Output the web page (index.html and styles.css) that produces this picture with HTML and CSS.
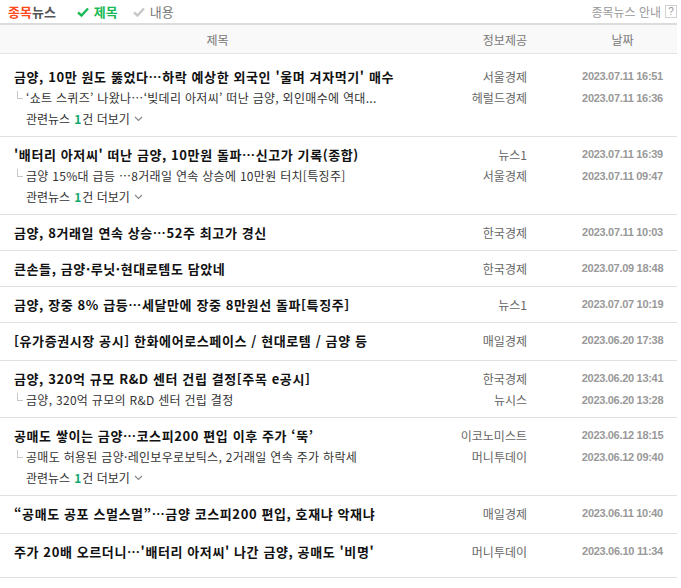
FILE: index.html
```html
<!DOCTYPE html>
<html lang="ko">

<head>
  <meta charset="UTF-8" />
  <meta name="viewport" content="width=device-width, initial-scale=1.0" />
  <title>종목뉴스</title>
  <link rel="stylesheet" href="styles.css">
</head>

<body>
  <div class="news_wrap">
    <div class="topbar">
      <div class="tabs">
        <span class="brand"><em>종목</em>뉴스</span>
        <span class="tab on">
          <svg width="12" height="10" viewBox="0 0 12 10"><path d="M1 5.5 L4.5 8.5 L11 1.5" fill="none" stroke="#19b955" stroke-width="2.4" /></svg>
          제목
        </span>
        <span class="tab">
          <svg width="12" height="10" viewBox="0 0 12 10"><path d="M1 5.5 L4.5 8.5 L11 1.5" fill="none" stroke="#c8c8c8" stroke-width="2.4" /></svg>
          내용
        </span>
      </div>
      <div class="guide">종목뉴스 안내 <span class="qbox">?</span></div>
    </div>

    <div class="thead">
      <span class="c-tit">제목</span>
      <span class="c-src">정보제공</span>
      <span class="c-date">날짜</span>
    </div>

    <div class="list">
      <div class="item first">
        <div class="line main"><span class="tit">금양, 10만 원도 뚫었다…하락 예상한 외국인 '울며 겨자먹기' 매수</span><span class="src">서울경제</span><span class="date">2023.07.11 16:51</span></div>
        <div class="line sub"><span class="tit"><i class="tree"></i>‘쇼트 스퀴즈’ 나왔나…‘빚데리 아저씨’ 떠난 금양, 외인매수에 역대...</span><span class="src">헤럴드경제</span><span class="date">2023.07.11 16:36</span></div>
        <div class="line more">관련뉴스 <b>1</b>건 더보기 <svg width="9" height="6" viewBox="0 0 9 6"><path d="M1 1 L4.5 4.5 L8 1" fill="none" stroke="#888" stroke-width="1.2" /></svg></div>
      </div>

      <div class="item">
        <div class="line main"><span class="tit">'배터리 아저씨' 떠난 금양, 10만원 돌파…신고가 기록(종합)</span><span class="src">뉴스1</span><span class="date">2023.07.11 16:39</span></div>
        <div class="line sub"><span class="tit"><i class="tree"></i>금양 15%대 급등 …8거래일 연속 상승에 10만원 터치[특징주]</span><span class="src">서울경제</span><span class="date">2023.07.11 09:47</span></div>
        <div class="line more">관련뉴스 <b>1</b>건 더보기 <svg width="9" height="6" viewBox="0 0 9 6"><path d="M1 1 L4.5 4.5 L8 1" fill="none" stroke="#888" stroke-width="1.2" /></svg></div>
      </div>

      <div class="item">
        <div class="line main"><span class="tit">금양, 8거래일 연속 상승…52주 최고가 경신</span><span class="src">한국경제</span><span class="date">2023.07.11 10:03</span></div>
      </div>

      <div class="item">
        <div class="line main"><span class="tit">큰손들, 금양·루닛·현대로템도 담았네</span><span class="src">한국경제</span><span class="date">2023.07.09 18:48</span></div>
      </div>

      <div class="item">
        <div class="line main"><span class="tit">금양, 장중 8% 급등…세달만에 장중 8만원선 돌파[특징주]</span><span class="src">뉴스1</span><span class="date">2023.07.07 10:19</span></div>
      </div>

      <div class="item tall">
        <div class="line main"><span class="tit">[유가증권시장 공시] 한화에어로스페이스 / 현대로템 / 금양 등</span><span class="src">매일경제</span><span class="date">2023.06.20 17:38</span></div>
      </div>

      <div class="item">
        <div class="line main"><span class="tit">금양, 320억 규모 R&amp;D 센터 건립 결정[주목 e공시]</span><span class="src">한국경제</span><span class="date">2023.06.20 13:41</span></div>
        <div class="line sub"><span class="tit"><i class="tree"></i>금양, 320억 규모의 R&amp;D 센터 건립 결정</span><span class="src">뉴시스</span><span class="date">2023.06.20 13:28</span></div>
      </div>

      <div class="item">
        <div class="line main"><span class="tit">공매도 쌓이는 금양…코스피200 편입 이후 주가 ‘뚝’</span><span class="src">이코노미스트</span><span class="date">2023.06.12 18:15</span></div>
        <div class="line sub"><span class="tit"><i class="tree"></i>공매도 허용된 금양·레인보우로보틱스, 2거래일 연속 주가 하락세</span><span class="src">머니투데이</span><span class="date">2023.06.12 09:40</span></div>
        <div class="line more">관련뉴스 <b>1</b>건 더보기 <svg width="9" height="6" viewBox="0 0 9 6"><path d="M1 1 L4.5 4.5 L8 1" fill="none" stroke="#888" stroke-width="1.2" /></svg></div>
      </div>

      <div class="item tall">
        <div class="line main"><span class="tit">“공매도 공포 스멀스멀”…금양 코스피200 편입, 호재냐 악재냐</span><span class="src">매일경제</span><span class="date">2023.06.11 10:40</span></div>
      </div>

      <div class="item last">
        <div class="line main"><span class="tit">주가 20배 오르더니…'배터리 아저씨' 나간 금양, 공매도 '비명'</span><span class="src">머니투데이</span><span class="date">2023.06.10 11:34</span></div>
      </div>
    </div>
  </div>
</body>

</html>
```

FILE: styles.css
```css
/* Main Container */
body {
  margin: 0;
  background: #fff;
}

.news_wrap {
  width: 677px;
  font-family: "Noto Sans CJK KR", "Noto Sans", sans-serif;
  color: #333;
}

/* Top bar */
.topbar {
  height: 23px;
  display: flex;
  align-items: center;
  justify-content: space-between;
  padding-left: 8px;
}

.tabs {
  display: flex;
  align-items: center;
  gap: 15px;
}

.brand {
  font-size: 13px;
  font-weight: bold;
  color: #555;
  margin-right: 6px;
}

.brand em {
  font-style: normal;
  color: #ff4a1c;
}

.tab {
  display: flex;
  align-items: center;
  gap: 5px;
  font-size: 13px;
  color: #777;
}

.tab.on {
  color: #19b955;
  font-weight: bold;
}

.guide {
  display: flex;
  align-items: center;
  gap: 4px;
  font-size: 12px;
  color: #999;
}

.qbox {
  width: 10px;
  height: 11px;
  border: 1px solid #d0d0d0;
  font-family: "Liberation Sans", sans-serif;
  font-size: 10px;
  line-height: 11px;
  text-align: center;
  color: #999;
}

/* Table header */
.thead {
  display: grid;
  grid-template-columns: 435px 133px 109px;
  height: 28px;
  align-items: center;
  background: #f9f9f9;
  border-top: 2px solid #dcdcdc;
  border-bottom: 1px solid #e3e3e3;
  font-size: 12px;
  color: #777;
}

.c-tit {
  text-align: center;
}

.c-src {
  text-align: right;
  padding-right: 41px;
}

.c-date {
  text-align: center;
}

/* Rows */
.item {
  padding: 6px 0 7px;
  border-bottom: 1px solid #e0e0e0;
}

.item.first {
  padding-top: 11px;
}

.item.tall {
  padding-bottom: 9px;
}

.item.last {
  padding-bottom: 15px;
}

.line {
  display: grid;
  grid-template-columns: 435px 133px 109px;
  align-items: center;
  height: 21px;
}

.line.main {
  height: 22px;
}

.line .tit {
  padding-left: 14px;
  white-space: nowrap;
}

.main .tit {
  font-size: 13px;
  font-weight: bold;
  color: #111;
  letter-spacing: 0.6px;
}

.sub .tit {
  padding-left: 17px;
  font-size: 12px;
  color: #333;
  letter-spacing: 0.3px;
  display: flex;
  align-items: center;
}

.tree {
  width: 5px;
  height: 7px;
  margin: -6px 3px 0 0;
  border-left: 1px solid #c8c8c8;
  border-bottom: 1px solid #c8c8c8;
}

.src {
  font-size: 12px;
  color: #666;
  text-align: right;
  padding-right: 41px;
}

.date {
  font-family: "Liberation Sans", sans-serif;
  font-size: 11px;
  font-weight: bold;
  letter-spacing: -0.3px;
  color: #999;
  text-align: center;
}

.more {
  display: flex;
  padding-left: 26px;
  font-size: 12px;
  color: #333;
}

.more b {
  color: #13a86f;
  margin: 0 1px 0 4px;
}

.more svg {
  margin-left: 4px;
}
```
